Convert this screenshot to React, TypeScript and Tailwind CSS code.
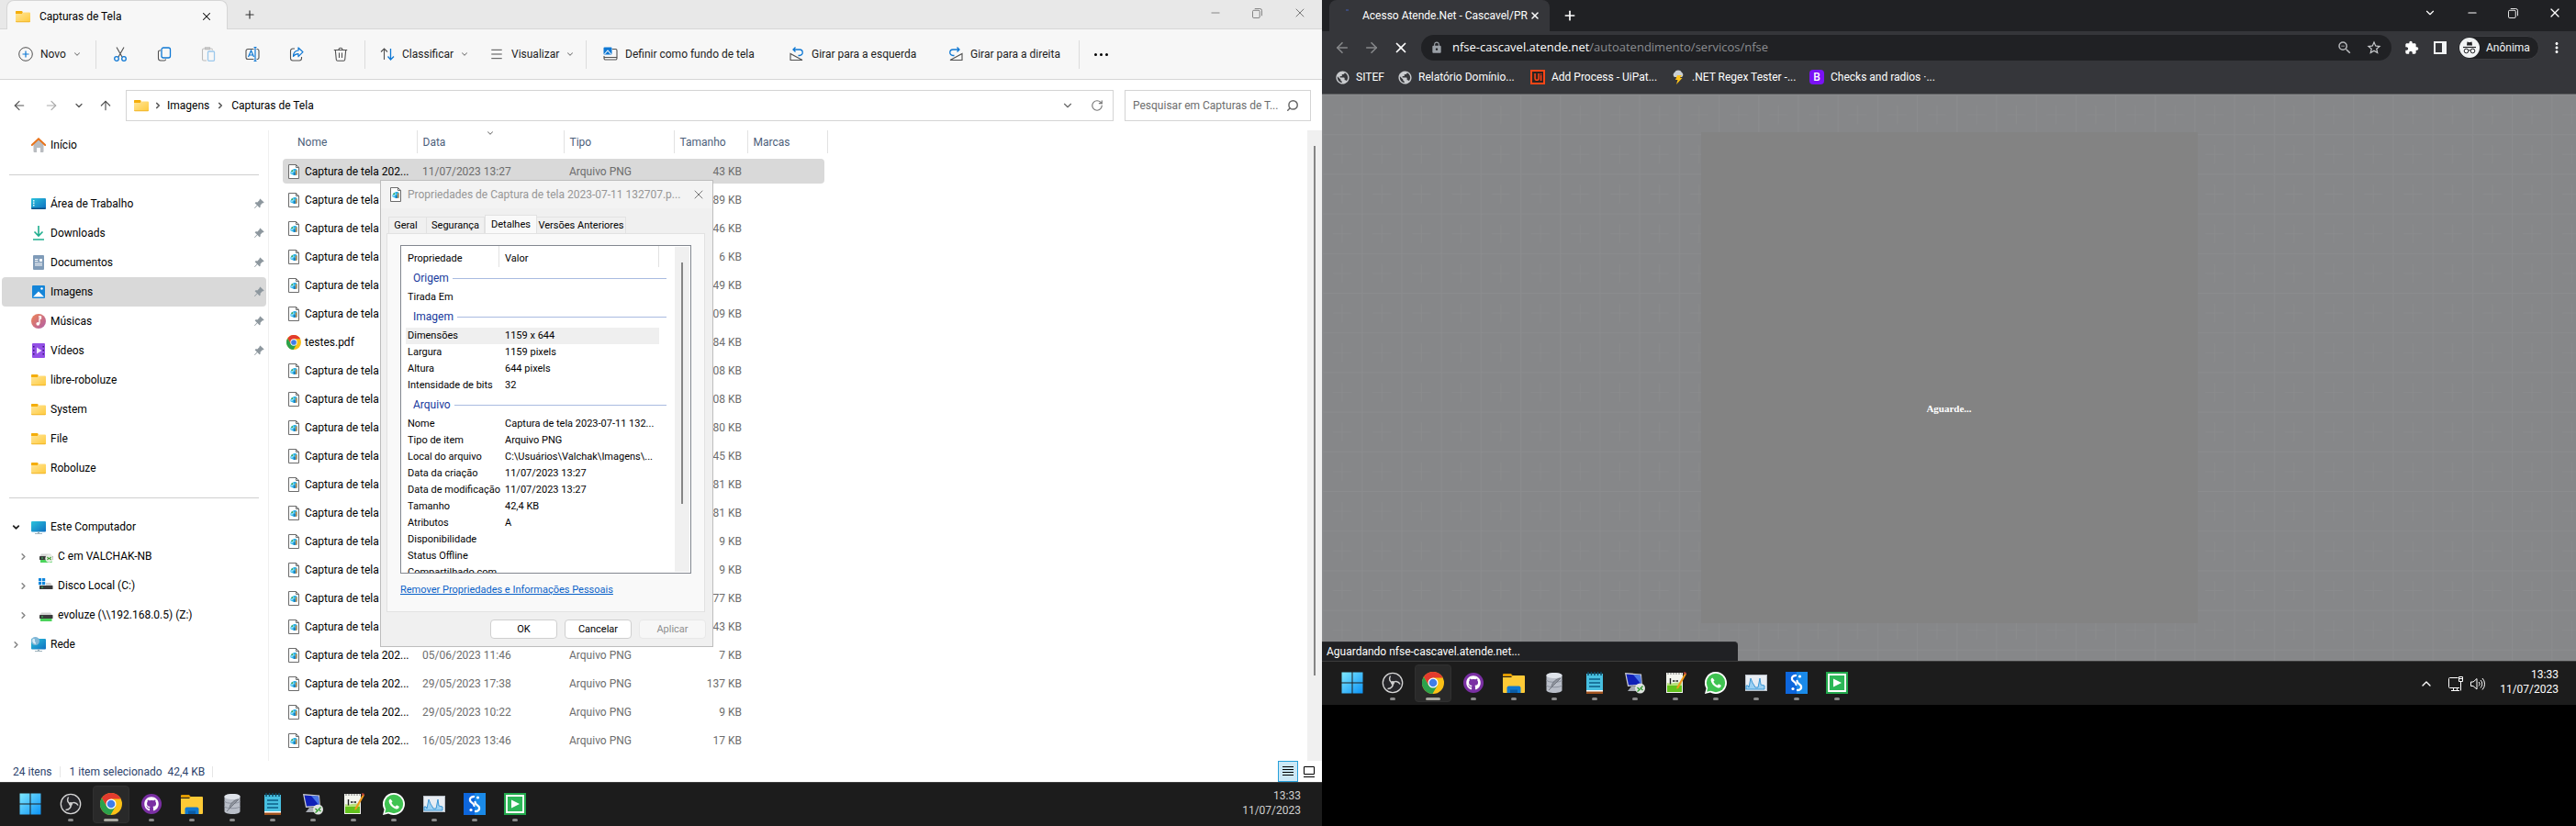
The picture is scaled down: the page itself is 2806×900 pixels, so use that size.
import React from "react";
import {
  ArrowLeft, ArrowRight, ArrowUp, ChevronDown, ChevronRight, ChevronUp, Menu, Minus, Plus, RotateCw, Search, X,
} from "lucide-react";
import { MdExtension, MdLock, MdMoreVert, MdPublic, MdStarBorder, MdZoomOut } from "react-icons/md";
import { FaGithub } from "react-icons/fa";
import { BsPinAngleFill } from "react-icons/bs";

const UI = "font-['Roboto','Open_Sans',sans-serif]";

/* ---------- shared drawings ---------- */

function Folder({ className = "h-4 w-4" }: { className?: string }) {
  return (
    <svg viewBox="0 0 16 16" className={className} aria-hidden="true">
      <defs>
        <linearGradient id="folder" x1="0" y1="0" x2="1" y2="1">
          <stop offset="0" stopColor="#ffe69a" />
          <stop offset="1" stopColor="#ffca3d" />
        </linearGradient>
      </defs>
      <path d="M0 3a1 1 0 0 1 1-1h5.500l1.500 1.500H0z" fill="#f0a800" />
      <path d="M0 2.500h7.500v4H0z" fill="#f5ae0b" />
      <path d="M0 5h7l1.500-1.500H15a1 1 0 0 1 1 1V13a1 1 0 0 1-1 1H1a1 1 0 0 1-1-1z" fill="url(#folder)" />
      <path d="M0 13.200h16a1 1 0 0 1-1 1H1a1 1 0 0 1-1-1z" fill="#f0b429" />
    </svg>
  );
}

function PngFile() {
  return (
    <svg viewBox="0 0 16 16" className="h-4 w-4 shrink-0" aria-hidden="true">
      <path d="M2.500.5h8l3 3v12h-11z" fill="#fff" stroke="#6b6b6b" />
      <path d="M10.500.5v3h3" fill="none" stroke="#6b6b6b" />
      <path d="M4.500 10.500c-.6-2.500 1-4.700 3.500-5.300 1.800-.4 3.700.3 3.700 1.500v4.500c-1.500 0-2.200.8-3.700.8-1 0-1-1-2-1z" fill="#29b1e6" />
      <path d="m4.500 9.500 2.800-3.300 1.500 1L6 10.500z" fill="#8fdcf7" />
      <circle cx="6.300" cy="7.200" r=".9" fill="#4caf50" />
      <path d="M9.800 6.500h1.700v5.300H9.800z" fill="#c98d4b" />
      <path d="M8.200 9h1.500v3H8.200z" fill="#1976b8" />
    </svg>
  );
}

function Chrome({ className = "h-6 w-6" }: { className?: string }) {
  return (
    <svg viewBox="0 0 24 24" className={className} aria-hidden="true">
      <circle cx="12" cy="12" r="12" fill="#fbc116" />
      <path d="M12 6.500h10.670A12 12 0 0 0 1.900 5.510l5.340 9.240z" fill="#e33b2e" />
      <path d="M1.900 5.510A12 12 0 0 0 11.430 24l5.330-9.250-9.520 0z" fill="#2ba24c" />
      <circle cx="12" cy="12" r="5.500" fill="#fff" />
      <circle cx="12" cy="12" r="4.300" fill="#3f7de8" />
    </svg>
  );
}

function Monitor({ dots = false, globe = false }: { dots?: boolean; globe?: boolean }) {
  return (
    <svg viewBox="0 0 16 16" className="h-4 w-4" aria-hidden="true">
      <defs>
        <linearGradient id="screen" x1="0" y1="0" x2="1" y2="1">
          <stop offset="0" stopColor="#2bc3dc" />
          <stop offset="1" stopColor="#0f6fc0" />
        </linearGradient>
      </defs>
      <rect x="0" y="2" width="16" height="11.500" rx="1" fill="url(#screen)" />
      {dots ? (
        <>
          <path d="M2 4h1.500v1.500H2zM2 6.500h1.500V8H2zM2 9h1.500v1.500H2z" fill="#e6f8fc" />
          <path d="M0 12.500h16v.5a1 1 0 0 1-1 1H1a1 1 0 0 1-1-1z" fill="#0a4f86" />
        </>
      ) : (
        <path d="M7 13.500h2v1.500h3v1H4v-1h3z" fill="#9fb3bd" />
      )}
      {globe && (
        <>
          <circle cx="4.500" cy="4.500" r="4.500" fill="#7fb6d6" />
          <path d="M1.500 2.500c2-1 3 0 2.500 1.500S6 6 4.500 8C3 7 .5 6 1.500 2.500z" fill="#d5ecf7" />
        </>
      )}
    </svg>
  );
}

function Drive({ kind }: { kind: "shared" | "local" | "net" }) {
  return (
    <svg viewBox="0 0 16 16" className="h-4 w-4" aria-hidden="true">
      {kind === "local" ? (
        <>
          <path d="M0 0h3.200v3.200H0zM4 0h3.200v3.200H4zM0 4h3.200v3.200H0zM4 4h3.200v3.200H4z" fill="#0f86dc" />
          <path d="M8 5h5l2 3H8z" fill="#d4d4d4" />
        </>
      ) : (
        <path d="M3 5.500h10l2 3H1z" fill="#d4d4d4" />
      )}
      <rect x="1" y="8" width="14.500" height="4" rx=".6" fill="#3a3a3a" />
      <circle cx="4" cy="10" r=".8" fill="#3fe06a" />
      {kind !== "local" && <path d="M2 12h12.500v3H2z" fill="#4bd35b" />}
      {kind === "shared" && (
        <>
          <circle cx="11.500" cy="10.500" r="4.200" fill="#e9efe6" />
          <path d="m9.500 9 1.500 1.500L9.500 12m4-3L12 10.500l1.500 1.500" fill="none" stroke="#3a9b2d" strokeWidth="1.100" />
        </>
      )}
    </svg>
  );
}

function Home() {
  return (
    <svg viewBox="0 0 16 16" className="h-4 w-4" aria-hidden="true">
      <path d="M2.500 7 8 2l5.500 5v8a1 1 0 0 1-1 1H10v-5H6v5H3.500a1 1 0 0 1-1-1z" fill="#b9bcc0" />
      <path d="M.8 8 8 1.300 15.200 8" fill="none" stroke="#e8731a" strokeWidth="2" strokeLinecap="round" />
    </svg>
  );
}

function Download() {
  return (
    <svg viewBox="0 0 16 16" className="h-4 w-4" fill="none" stroke="#1fae8e" strokeWidth="1.600" aria-hidden="true">
      <path d="M8 0v11M3.500 6.500 8 11l4.500-4.500M2 15h12" />
    </svg>
  );
}

function Documents() {
  return (
    <svg viewBox="0 0 16 16" className="h-4 w-4" aria-hidden="true">
      <rect x="2" width="12" height="16" rx="1" fill="#7f9bb8" />
      <path d="M4 4h3.500v1H4zM4 6h3.500v1H4zM4 8.500h8v1H4zM4 10.500h8v1H4zM9 4h3v3H9z" fill="#fff" />
    </svg>
  );
}

function Pictures() {
  return (
    <svg viewBox="0 0 16 16" className="h-4 w-4" aria-hidden="true">
      <rect x="1" y="1" width="14" height="14" rx="1" fill="#1585d8" />
      <path d="m2 13.500 6-6 6 6z" fill="#fff" />
      <circle cx="11.500" cy="4.500" r="1.200" fill="#fff" />
    </svg>
  );
}

function Music() {
  return (
    <svg viewBox="0 0 16 16" className="h-4 w-4" aria-hidden="true">
      <defs>
        <linearGradient id="music" x1="0" y1="0" x2="1" y2="1">
          <stop offset="0" stopColor="#ef8354" />
          <stop offset="1" stopColor="#b05fa8" />
        </linearGradient>
      </defs>
      <circle cx="8" cy="8" r="8" fill="url(#music)" />
      <path d="M8 3h2.500v2H9v5.500" fill="none" stroke="#fff" strokeWidth="1.300" />
      <circle cx="7.300" cy="10.800" r="1.900" fill="#fff" />
    </svg>
  );
}

function Videos() {
  return (
    <svg viewBox="0 0 16 16" className="h-4 w-4" aria-hidden="true">
      <rect x="1" width="14" height="16" rx="1" fill="#9350e6" />
      <path d="M2 3h1.500v1.500H2zM2 7h1.500v1.500H2zM2 11h1.500v1.500H2zM12.500 3H14v1.500h-1.500zM12.500 7H14v1.500h-1.500zM12.500 11H14v1.500h-1.500z" fill="#3b1b78" />
      <path d="m6 4.500 5.500 3.500L6 11.500z" fill="#f1e6ff" />
    </svg>
  );
}

/* ---------- ribbon drawings ---------- */

type DrawProps = { children: React.ReactNode; className?: string };
const Draw = ({ children, className = "h-4 w-4" }: DrawProps) => (
  <svg viewBox="0 0 16 16" className={className} fill="none" stroke="#505050" strokeWidth="1.100" aria-hidden="true">
    {children}
  </svg>
);
const CutIcon = () => (
  <Draw>
    <path d="m4 .5 6 10.500M12 .5 6 11" />
    <g stroke="#0f78d4" strokeWidth="1.300"><circle cx="4" cy="13" r="2.300" /><circle cx="12" cy="13" r="2.300" /></g>
  </Draw>
);
const CopyIcon = () => (
  <Draw>
    <path d="M4 4H3a1.500 1.500 0 0 0-1.500 1.500v7A2.500 2.500 0 0 0 4 15h4a1.500 1.500 0 0 0 1.500-1.500" />
    <rect x="5" y="1" width="9.500" height="11" rx="2" stroke="#0f78d4" strokeWidth="1.300" />
  </Draw>
);
const PasteIcon = () => (
  <Draw>
    <path d="M6 15H3a1.500 1.500 0 0 1-1.500-1.500v-10A1.500 1.500 0 0 1 3 2h8a1.500 1.500 0 0 1 1.500 1.500M4.500.800h5v2h-5z" stroke="#bcbcbc" />
    <rect x="7.500" y="5" width="7" height="10.300" rx="1" stroke="#9cc8ec" strokeWidth="1.300" />
  </Draw>
);
const RenameIcon = () => (
  <Draw>
    <path d="M9.500 2.500H3A2 2 0 0 0 1 4.500v7a2 2 0 0 0 2 2h6.500M12.500 2.500A2 2 0 0 1 15 4.500v7a2 2 0 0 1-2.500 2" />
    <path d="m3.500 11 3-7 3 7M4.500 9h4M11 .5v15M9.500.500h3M9.500 15.500h3" stroke="#0f78d4" strokeWidth="1.200" />
  </Draw>
);
const ShareIcon = () => (
  <Draw>
    <path d="M6 2H4a2.500 2.500 0 0 0-2.500 2.500v8A2.500 2.500 0 0 0 4 15h7a2.500 2.500 0 0 0 2.500-2.500V11" />
    <path d="M10 1v3C6 4.300 4.500 7 4.500 10.500 6 8.300 8 7.700 10 7.700v3l5-5z" stroke="#0f78d4" strokeWidth="1.200" strokeLinejoin="round" />
  </Draw>
);
const TrashIcon = () => (
  <Draw>
    <path d="M.8 3.500h14.400M6 3.300a2 2 0 0 1 4 0M2.300 3.500l1 10.500a1.500 1.500 0 0 0 1.500 1.300h6.400a1.500 1.500 0 0 0 1.500-1.300l1-10.500M6.500 6.500v5.500M9.500 6.500v5.500" />
  </Draw>
);
const SortIcon = () => (
  <Draw>
    <path d="M4.500 14V2M1 5.500 4.500 2 8 5.500" />
    <path d="M11.500 2v12M8.500 10.500l3 3.500 3.500-3.500" stroke="#0f78d4" strokeWidth="1.300" />
  </Draw>
);
const WallpaperIcon = () => (
  <Draw>
    <path d="M10 2.500h3.500A1.500 1.500 0 0 1 15 4v8.500a1.500 1.500 0 0 1-1.500 1.500h-11A1.500 1.500 0 0 1 1 12.500V10M1 11.500h14" />
    <rect x=".5" y=".5" width="9" height="8" rx="1" fill="#0f78d4" stroke="none" />
    <path d="m1.500 8 3.500-4 3.500 4" stroke="#fff" />
  </Draw>
);
const RotateIcon = ({ flip = false }: { flip?: boolean }) => (
  <Draw className={flip ? "h-4 w-4 -scale-x-100" : "h-4 w-4"}>
    <path d="M1 7.500v7h13z" />
    <path d="M4 3h7a3.200 3.200 0 0 1 0 6.500H9.500M6.500.500 4 3l2.500 2.500" stroke="#0f78d4" strokeWidth="1.300" />
  </Draw>
);
const RestoreIcon = ({ className }: { className: string }) => (
  <svg viewBox="0 0 12 12" className={className} fill="none" stroke="currentColor" aria-hidden="true">
    <rect x=".5" y="2.500" width="8.500" height="9" rx="1.500" />
    <path d="M3 .5h6A2.500 2.500 0 0 1 11.500 3v6" />
  </svg>
);

/* ---------- taskbar ---------- */

const taskIcons: { name: string; art: React.ReactNode; active?: boolean; idle?: boolean }[] = [
  {
    name: "Iniciar",
    idle: true,
    art: (
      <svg viewBox="0 0 24 24" className="h-6 w-6">
        <defs>
          <linearGradient id="win" x1="0" y1="0" x2="1" y2="1"><stop offset="0" stopColor="#7fe8ff" /><stop offset="1" stopColor="#0c93f5" /></linearGradient>
        </defs>
        <path d="M.5.500h11v11H.5zM12.500.500h11v11h-11zM.5 12.500h11v11H.5zM12.500 12.500h11v11h-11z" fill="url(#win)" />
      </svg>
    ),
  },
  {
    name: "OBS Studio",
    art: (
      <svg viewBox="0 0 24 24" className="h-6 w-6">
        <circle cx="12" cy="12" r="10.700" fill="#26262a" stroke="#d5d5d5" strokeWidth="1.300" />
        <g fill="none" stroke="#cfcfcf" strokeWidth="1.500">
          <path d="M12 12c-3-1-4.500-4-2.500-7.500" />
          <path d="M12 12c3-2.500 6.500-1.500 8 1.500" />
          <path d="M12 12c1 3.500-1.500 6.500-5.500 6.500" />
        </g>
        <circle cx="12" cy="12" r="2" fill="#cfcfcf" />
      </svg>
    ),
  },
  { name: "Chrome", active: true, art: <Chrome /> },
  {
    name: "GitHub Desktop",
    art: (
      <span className="grid h-[22px] w-[22px] place-items-center rounded-full bg-[#7a2fa3]"><FaGithub className="h-4 w-4 text-white" /></span>
    ),
  },
  {
    name: "Explorador",
    art: (
      <svg viewBox="0 0 24 24" className="h-6 w-6">
        <path d="M0 3a1 1 0 0 1 1-1h8l2.500 3H0z" fill="#e09a00" />
        <path d="M0 6h9l2-2h12a1 1 0 0 1 1 1v17a1 1 0 0 1-1 1H1a1 1 0 0 1-1-1z" fill="#fdca36" />
        <path d="M4.500 17.500a2 2 0 0 1 2-2h11a2 2 0 0 1 2 2V23h-15z" fill="#0f78cf" />
        <path d="M8 19.500h8V23H8z" fill="#0a5ca6" />
      </svg>
    ),
  },
  {
    name: "Banco de dados",
    art: (
      <svg viewBox="0 0 24 24" className="h-6 w-6">
        <path d="M3.500 4c0-4 17-4 17 0v16c0 4-17 4-17 0z" fill="#b9bec8" />
        <path d="M3.500 4c0-4 17-4 17 0s-17 4-17 0z" fill="#dfe3ea" />
        <path d="M3.500 9c1 3 16 3 17 0M3.500 14.500c1 3 16 3 17 0" fill="none" stroke="#8b919d" />
        <path d="M6 20 19 7c-5 .5-9 4-10 9" fill="#8f949e" stroke="#6a6e77" strokeWidth=".8" />
      </svg>
    ),
  },
  {
    name: "Bloco de notas",
    art: (
      <svg viewBox="0 0 24 24" className="h-6 w-6">
        <rect x="3" y="2" width="18" height="20" fill="#47bfe0" />
        <path d="M3 20h18v2H3z" fill="#fff" /><path d="M3 21.500h18V24H3z" fill="#a0521e" />
        <path d="M6 8h12M6 12h12M6 16h12" stroke="#0c5f86" strokeWidth="1.500" />
        <path d="M5 0v4M8.500 0v4M12 0v4M15.500 0v4M19 0v4" stroke="#0d4a66" strokeWidth="1.500" />
      </svg>
    ),
  },
  {
    name: "Área de trabalho remota",
    art: (
      <svg viewBox="0 0 24 24" className="h-6 w-6">
        <path d="m1 1 18 1.500 1 12.500L4 16z" fill="#c9ccd2" />
        <path d="m2.500 2.500 15.500 1.200.8 10L5 14.500z" fill="#1020b8" />
        <path d="m10 3 8 .7.8 10z" fill="#4a78e8" />
        <path d="M8 16h5l2 5H4z" fill="#a7abb3" />
        <circle cx="17.500" cy="18" r="5.500" fill="#dfe3df" />
        <path d="m14.500 17 2.500 2.500-2.500 2m6-6L18 18l2.500 2" fill="none" stroke="#2f9a2d" strokeWidth="1.300" />
      </svg>
    ),
  },
  {
    name: "Notepad++",
    art: (
      <svg viewBox="0 0 24 24" className="h-6 w-6">
        <path d="M2 1h18v22H2z" fill="#f3f5ee" />
        <path d="M3 14h16v8H3z" fill="#62c21d" />
        <path d="M3 12c5 2 10-2 16 0v3H3z" fill="#b7e07c" />
        <path d="M3 2h16" stroke="#777" strokeDasharray="2 1" />
        <path d="M6.500 7v6.500M9 10h2.500M12.500 10H15" stroke="#222" strokeWidth="1.400" />
        <path d="m22.500 1-9 15.500 0 2.500 2-1.500L24 2.500z" fill="#f09a1c" />
        <path d="m21.500 0 2.500 1-1 2-2-1z" fill="#c4423a" />
      </svg>
    ),
  },
  {
    name: "WhatsApp",
    art: (
      <svg viewBox="0 0 24 24" className="h-6 w-6">
        <path d="M12 0A12 12 0 1 1 6 22.400L0 24l1.600-6A12 12 0 0 1 12 0z" fill="#fff" />
        <circle cx="12" cy="12" r="10.200" fill="#3fc351" /><path d="m2.200 21.800 1.500-6 4.500 4.500z" fill="#3fc351" />
        <path d="M8.300 6.500c-1.800.6-2.200 2.600-1 5 1.600 3.200 4 5 7 5.900 2 .5 3.500-.7 3.500-2.600l-2.700-1.500-1.300 1.500c-2-.7-3.500-2.200-4.400-4.100l1.200-1.400z" fill="#fff" />
      </svg>
    ),
  },
  {
    name: "Monitor",
    art: (
      <svg viewBox="0 0 24 24" className="h-6 w-6">
        <rect y="3" width="24" height="18" fill="#b8bec6" /><rect x="1" y="4" width="22" height="16" fill="#e8edf3" />
        <path d="M1 15h2l1 2 2-10 2 5 2 3 1 2h3l2-10 1 7 4 1v4H1z" fill="#9ad0f3" stroke="#2f8fd0" strokeWidth=".9" />
      </svg>
    ),
  },
  {
    name: "SS",
    art: (
      <svg viewBox="0 0 24 24" className="h-6 w-6">
        <path d="M0 0h24v24H0z" fill="#0d66dc" /><path d="M12 0h12v24H12z" fill="#1a8ae8" />
        <path d="M11 4c-3 0-4.500 2-4 4.200.5 2.300 4.500 2.800 4.500 5.800M13 20c3 0 4.500-2 4-4.200-.5-2.300-4.500-2.800-4.500-5.800" fill="none" stroke="#fff" strokeWidth="2.300" strokeLinecap="round" />
        <circle cx="15.500" cy="5" r="1.600" fill="#fff" /><circle cx="8" cy="18.500" r="1.600" fill="#fff" />
      </svg>
    ),
  },
  {
    name: "Executor",
    art: (
      <svg viewBox="0 0 24 24" className="h-6 w-6">
        <path d="M0 0h24v24H0z" fill="#22a94c" /><path d="M3 3h18v18H3z" fill="#2cb757" stroke="#fff" strokeWidth="1.800" />
        <path d="m8 7.500 9 4.500-9 4.500z" fill="#fff" />
      </svg>
    ),
  },
];

function Taskbar({ tray = false }: { tray?: boolean }) {
  return (
    <footer className="flex h-12 shrink-0 items-stretch border-t border-[#3c3c3c] bg-[#1c1c1c] pl-[11px]">
      {taskIcons.map((t) => (
        <button
          key={t.name}
          aria-label={t.name}
          className={`mx-0.5 my-[3px] flex w-10 flex-col items-center rounded pt-[7px] ${t.active ? "border border-[#303030] bg-[#292929]" : "border border-transparent"}`}
        >
          <span className="grid h-6 w-6 place-items-center">{t.art}</span>
          {!t.idle && <span className={`mt-1 h-[3px] rounded-full ${t.active ? "w-4 bg-[#a8a8a0]" : "w-1.5 bg-[#8a8a8a]"}`} />}
        </button>
      ))}
      <div className={`ml-auto flex items-center text-white ${tray ? "pr-[19px]" : "pr-[23px]"}`}>
        {tray && (
          <div className="mr-4 flex items-center">
            <ChevronUp className="mr-4 h-4 w-4" />
            <svg viewBox="0 0 16 16" className="mr-2 h-4 w-4" fill="none" stroke="currentColor" aria-hidden="true">
              <path d="M10.500 1.500H1.500a1 1 0 0 0-1 1v9a1 1 0 0 0 1 1H12M5.500 12.500v2.500M9.500 12.500v2.500M3 15.500h9M11.500.500h4v5h-4zM13.500 5.500v10M12 2.500h3" />
            </svg>
            <svg viewBox="0 0 16 16" className="h-4 w-4" fill="none" stroke="currentColor" aria-hidden="true">
              <path d="M.5 6v4.500H3l4 3.500V2.500L3 6zM9 6a3 3 0 0 1 0 4.500M11 4a6 6 0 0 1 0 8.500M13 2a9 9 0 0 1 0 12.500" />
            </svg>
          </div>
        )}
        <div className={`pb-1 text-right text-xs leading-4 ${tray ? "" : "text-[#cfcfcf]"}`}>
          <div>13:33</div>
          <div>11/07/2023</div>
        </div>
      </div>
    </footer>
  );
}

/* ---------- explorer ---------- */

const VRule = () => <span className="h-[31px] w-px bg-[#dcdcdc]" />;

function RibbonButton({ icon, label, width, menu = false }: { icon: React.ReactNode; label: string; width: string; menu?: boolean }) {
  return (
    <button className={`flex items-center ${width}`}>
      {icon}
      <span className="mr-[7px] ml-2 whitespace-nowrap">{label}</span>
      {menu && <ChevronDown className="h-2.5 w-2.5 text-[#777]" strokeWidth={2.5} />}
    </button>
  );
}

function Ribbon() {
  return (
    <div className="flex h-[55px] items-center border-b border-[#d6d6d6] bg-[#f7f7f7] pl-5 text-[#1b1b1b]">
      <RibbonButton
        icon={
          <svg viewBox="0 0 16 16" className="h-4 w-4" fill="none" aria-hidden="true">
            <circle cx="8" cy="8" r="7.300" stroke="#505050" /><path d="M8 4.500v7M4.500 8h7" stroke="#0f78d4" strokeWidth="1.200" />
          </svg>
        }
        label="Novo" width="w-[84px]" menu
      />
      <VRule />
      <div className="mr-0.5 ml-0.5 flex">
        {[["Recortar", CutIcon], ["Copiar", CopyIcon], ["Colar", PasteIcon], ["Renomear", RenameIcon], ["Compartilhar", ShareIcon], ["Excluir", TrashIcon]].map(([n, I]) => {
          const Icon = I as React.FC;
          return (
            <button key={n as string} aria-label={n as string} className="grid h-8 w-12 place-items-center"><Icon /></button>
          );
        })}
      </div>
      <VRule />
      <div className="ml-4 flex">
        <RibbonButton icon={<SortIcon />} label="Classificar" width="w-[119px]" menu />
        <RibbonButton icon={<Menu className="h-4 w-4 text-[#505050]" strokeWidth={1.5} />} label="Visualizar" width="w-[105px]" menu />
      </div>
      <VRule />
      <div className="ml-[18px] flex">
        <RibbonButton icon={<WallpaperIcon />} label="Definir como fundo de tela" width="w-[203px]" />
        <RibbonButton icon={<RotateIcon />} label="Girar para a esquerda" width="w-[173px]" />
        <RibbonButton icon={<RotateIcon flip />} label="Girar para a direita" width="w-[142px]" />
      </div>
      <VRule />
      <button aria-label="Mais" className="ml-4 flex gap-[3px]">
        <i className="h-[3px] w-[3px] rounded-full bg-black" /><i className="h-[3px] w-[3px] rounded-full bg-black" /><i className="h-[3px] w-[3px] rounded-full bg-black" />
      </button>
    </div>
  );
}

function NavItem({ icon, label, pinned, active, arrow, deep }: { icon: React.ReactNode; label: string; pinned?: boolean; active?: boolean; arrow?: "down" | "right"; deep?: boolean }) {
  return (
    <a href="#" className={`mr-[2px] ml-0.5 flex h-8 items-center rounded-sm pr-0.5 ${deep ? "pl-[18px]" : "pl-2.5"} ${active ? "bg-[#d9d9d9]" : ""}`}>
      <span className="flex w-[22px]">
        {arrow === "down" && <ChevronDown className="h-[11px] w-[11px] text-[#222]" strokeWidth={4} />}
        {arrow === "right" && <ChevronRight className="h-[11px] w-[11px] text-[#888]" strokeWidth={3.5} />}
      </span>
      {icon}
      <span className="ml-[5px]">{label}</span>
      {pinned && <BsPinAngleFill className="ml-auto h-3 w-3 text-[#8d979e]" />}
    </a>
  );
}

const NavRule = () => <div className="flex h-8 items-center px-2.5"><hr className="w-full border-[#cfcfcf]" /></div>;

function Sidebar() {
  return (
    <nav className="w-[293px] shrink-0 border-r border-[#f0f0f0] text-black">
      <NavItem icon={<Home />} label="Início" />
      <NavRule />
      <NavItem icon={<Monitor dots />} label="Área de Trabalho" pinned />
      <NavItem icon={<Download />} label="Downloads" pinned />
      <NavItem icon={<Documents />} label="Documentos" pinned />
      <NavItem icon={<Pictures />} label="Imagens" pinned active />
      <NavItem icon={<Music />} label="Músicas" pinned />
      <NavItem icon={<Videos />} label="Vídeos" pinned />
      <NavItem icon={<Folder />} label="libre-roboluze" />
      <NavItem icon={<Folder />} label="System" />
      <NavItem icon={<Folder />} label="File" />
      <NavItem icon={<Folder />} label="Roboluze" />
      <NavRule />
      <NavItem icon={<Monitor />} label="Este Computador" arrow="down" />
      <NavItem icon={<Drive kind="shared" />} label="C em VALCHAK-NB" arrow="right" deep />
      <NavItem icon={<Drive kind="local" />} label="Disco Local (C:)" arrow="right" deep />
      <NavItem icon={<Drive kind="net" />} label={"evoluze (\\\\192.168.0.5) (Z:)"} arrow="right" deep />
      <NavItem icon={<Monitor globe />} label="Rede" arrow="right" />
    </nav>
  );
}

const full = "Captura de tela 202...";
const part = "Captura de tela";
const files: [string, string, string, string][] = [
  [full, "11/07/2023 13:27", "Arquivo PNG", "43 KB"],
  [part, "", "", "89 KB"],
  [part, "", "", "46 KB"],
  [part, "", "", "6 KB"],
  [part, "", "", "49 KB"],
  [part, "", "", "09 KB"],
  ["testes.pdf", "", "", "84 KB"],
  [part, "", "", "08 KB"],
  [part, "", "", "08 KB"],
  [part, "", "", "80 KB"],
  [part, "", "", "45 KB"],
  [part, "", "", "81 KB"],
  [part, "", "", "81 KB"],
  [part, "", "", "9 KB"],
  [part, "", "", "9 KB"],
  [part, "", "", "77 KB"],
  [part, "", "", "43 KB"],
  [full, "05/06/2023 11:46", "Arquivo PNG", "7 KB"],
  [full, "29/05/2023 17:38", "Arquivo PNG", "137 KB"],
  [full, "29/05/2023 10:22", "Arquivo PNG", "9 KB"],
  [full, "16/05/2023 13:46", "Arquivo PNG", "17 KB"],
];

function FileTable() {
  const th = "border-r border-[#e2e2e2] p-0 text-left font-normal";
  return (
    <table className="ml-[15px] table-fixed self-start whitespace-nowrap text-[#6d6d6d]">
      <colgroup><col className="w-[146px]" /><col className="w-40" /><col className="w-[120px]" /><col className="w-20" /><col className="w-[87px]" /></colgroup>
      <thead className="text-[#4c607a]">
        <tr className="h-[25px]">
          <th className={`${th} pl-4`}>Nome</th>
          <th className={`${th} relative pl-1.5`}>Data<ChevronDown className="absolute -top-0.5 left-[74px] h-2.5 w-2.5 text-[#777]" strokeWidth={2.5} /></th>
          <th className={`${th} pl-1.5`}>Tipo</th>
          <th className={`${th} pl-1.5`}>Tamanho</th>
          <th className={`${th} pl-1.5`}>Marcas</th>
        </tr>
        <tr className="h-1"><td colSpan={5} /></tr>
      </thead>
      <tbody>
        {files.map(([name, date, type, size], i) => {
          const bg = i === 0 ? "bg-[#d9d9d9]" : "";
          return (
            <tr key={i} className="h-[31px]">
              <td className="p-0">
                <div className={`flex h-[27px] items-center gap-1 rounded-l-sm pl-1 text-black ${bg}`}>
                  {name.endsWith("pdf") ? <Chrome className="h-4 w-4" /> : <PngFile />}
                  <span>{name}</span>
                </div>
              </td>
              <td className="p-0"><div className={`flex h-[27px] items-center pl-1.5 ${bg}`}>{date}</div></td>
              <td className="p-0"><div className={`flex h-[27px] items-center pl-1.5 ${bg}`}>{type}</div></td>
              <td className="p-0"><div className={`flex h-[27px] items-center justify-end pr-1.5 ${bg}`}>{size}</div></td>
              <td className="p-0"><div className={`mr-[3px] h-[27px] rounded-r-sm ${bg}`} /></td>
            </tr>
          );
        })}
      </tbody>
    </table>
  );
}

function PropRow({ k, v = "", hot }: { k: string; v?: string; hot?: boolean }) {
  return (
    <tr className={`h-[18px] ${hot ? "bg-[#efefef]" : ""}`}>
      <td className="w-[108px] p-0 pl-0.5">{k}</td>
      <td className="p-0">{v}</td>
    </tr>
  );
}

function PropGroup({ title }: { title: string }) {
  return (
    <tr className="h-6">
      <td colSpan={2} className="p-0">
        <div className="-mr-2 flex items-center gap-1 pl-2 text-xs text-[#16389c]">
          {title}
          <span className="h-px flex-1 bg-[#a9bbe0]" />
        </div>
      </td>
    </tr>
  );
}

function PropertiesDialog() {
  const tab = "border border-b-0 border-[#e2e2e2] leading-[17px]";
  const btn = "h-[21px] w-[73px] rounded border";
  return (
    <section role="dialog" aria-label="Propriedades" className="absolute top-[196px] left-[414px] flex h-[509px] w-[363px] flex-col border border-[#bdbdbd] bg-[#f0f0f0] text-[11px] leading-4 text-black">
      <header className="flex h-[30px] items-center bg-[#f3f3f3] pr-[7px] pl-2 text-xs text-[#969696]">
        <PngFile />
        <span className="ml-[5px] whitespace-nowrap">Propriedades de Captura de tela 2023-07-11 132707.p...</span>
        <button aria-label="Fechar" className="ml-auto"><X className="h-4 w-4 text-[#777]" strokeWidth={1.5} /></button>
      </header>
      <div role="tablist" className="mt-[7px] flex h-5 items-end pl-2">
        <button role="tab" className={`${tab} h-[18px] w-[42px] pr-1`}>Geral</button>
        <button role="tab" className={`${tab} h-[18px] w-[63px] border-l-0`}>Segurança</button>
        <button role="tab" aria-selected="true" className={`${tab} h-5 w-[57px] bg-[#f9f9f9]`}>Detalhes</button>
        <button role="tab" className={`${tab} h-[18px] w-[97px] border-l-0`}>Versões Anteriores</button>
      </div>
      <div className="mx-1.5 mr-2 flex h-[413px] flex-col border border-[#e2e2e2] bg-[#f9f9f9] px-3.5 pt-3">
        <div className="flex h-[358px] shrink-0 overflow-hidden border border-[#82878f] bg-white">
          <div className="w-[281px] shrink-0 pl-[5px]">
            <div className="flex h-[23px] items-center">
              <span className="flex h-full w-[102px] items-center border-r border-[#e2e2e2] pt-1 pl-0.5">Propriedade</span>
              <span className="flex h-full flex-1 items-center border-r border-[#e2e2e2] pt-1 pl-1.5">Valor</span>
            </div>
            <table className="w-full border-collapse whitespace-nowrap">
              <tbody>
                <PropGroup title="Origem" />
                <PropRow k="Tirada Em" />
                <PropGroup title="Imagem" />
                <PropRow k="Dimensões" v="1159 x 644" hot />
                <PropRow k="Largura" v="1159 pixels" />
                <PropRow k="Altura" v="644 pixels" />
                <PropRow k="Intensidade de bits" v="32" />
                <PropGroup title="Arquivo" />
                <PropRow k="Nome" v="Captura de tela 2023-07-11 132..." />
                <PropRow k="Tipo de item" v="Arquivo PNG" />
                <PropRow k="Local do arquivo" v={"C:\\Usuários\\Valchak\\Imagens\\..."} />
                <PropRow k="Data da criação" v="11/07/2023 13:27" />
                <PropRow k="Data de modificação" v="11/07/2023 13:27" />
                <PropRow k="Tamanho" v="42,4 KB" />
                <PropRow k="Atributos" v="A" />
                <PropRow k="Disponibilidade" />
                <PropRow k="Status Offline" />
                <PropRow k="Compartilhado com" />
              </tbody>
            </table>
          </div>
          <div className="my-px mr-px ml-auto flex w-4 justify-center bg-[#f0f0f0] pt-[17px]"><span className="h-[263px] w-0.5 bg-[#858585]" /></div>
        </div>
        <a href="#" className="mt-2.5 self-start whitespace-nowrap text-[#0a62c8] underline">Remover Propriedades e Informações Pessoais</a>
      </div>
      <div className="mt-2 flex justify-end gap-2 pr-[7px]">
        <button className={`${btn} border-[#cfcfcf] bg-white`}>OK</button>
        <button className={`${btn} border-[#cfcfcf] bg-white`}>Cancelar</button>
        <button disabled className={`${btn} border-[#e8e8e8] bg-[#f7f7f7] text-[#8e8e8e]`}>Aplicar</button>
      </div>
    </section>
  );
}

function Explorer() {
  return (
    <div className="relative flex min-h-screen flex-col bg-white text-xs">
      <header className="flex h-8 items-stretch border-b border-[#d6d6d6] bg-[#e8e8e8] pl-[7px]">
        <div className="-mb-px flex w-[241px] items-center rounded-t-lg border border-b-0 border-[#d6d6d6] bg-[#f7f7f7] pt-0.5 pr-[15px] pl-[9px] text-black">
          <Folder />
          <span className="ml-2.5">Capturas de Tela</span>
          <button aria-label="Fechar guia" className="ml-auto"><X className="h-3.5 w-3.5" strokeWidth={1.8} /></button>
        </div>
        <button aria-label="Nova guia" className="ml-[17px]"><Plus className="h-3.5 w-3.5 text-[#333]" strokeWidth={2} /></button>
        <div className="ml-auto flex items-center gap-[33px] pr-4 pb-[3px] text-[#777]">
          <Minus className="h-3.5 w-3.5" strokeWidth={1.5} />
          <RestoreIcon className="h-[11px] w-[11px]" />
          <X className="h-4 w-4" strokeWidth={1.5} />
        </div>
      </header>
      <Ribbon />
      <div className="flex h-[55px] items-center py-2.5 pr-3 pl-[13px] text-[#555]">
        <ArrowLeft className="h-4 w-4" strokeWidth={1.8} />
        <ArrowRight className="ml-[19px] h-4 w-4 text-[#aaa]" strokeWidth={1.8} />
        <ChevronDown className="ml-4 h-3 w-3" strokeWidth={2.5} />
        <ArrowUp className="ml-[15px] h-4 w-4" strokeWidth={1.8} />
        <div className="ml-3.5 flex h-[34px] flex-1 items-center border border-[#d4d4d4] pr-2.5 pl-2 text-black">
          <Folder />
          <ChevronRight className="ml-[5px] h-2.5 w-2.5 text-[#555]" strokeWidth={4} />
          <a href="#" className="ml-[5px]">Imagens</a>
          <ChevronRight className="ml-[7px] h-2.5 w-2.5 text-[#555]" strokeWidth={4} />
          <a href="#" className="ml-[7px]">Capturas de Tela</a>
          <ChevronDown className="ml-auto h-3.5 w-3.5 text-[#666]" strokeWidth={2} />
          <RotateCw className="ml-[18px] h-3.5 w-3.5 text-[#777]" strokeWidth={2} />
        </div>
        <label className="ml-3 flex h-[34px] w-[203px] items-center border border-[#d4d4d4] pr-3 pl-2">
          <input aria-label="Pesquisar" placeholder="Pesquisar em Capturas de T..." className="w-full min-w-0 outline-none placeholder:text-[#6d6d6d]" />
          <Search className="h-3.5 w-3.5 shrink-0 -scale-x-100 text-[#666]" strokeWidth={2.5} />
        </label>
      </div>
      <main className="flex flex-1">
        <Sidebar />
        <FileTable />
        <div className="ml-auto flex w-4 justify-center bg-[#f0f0f0] pt-[17px]"><span className="h-[577px] w-0.5 bg-[#858585]" /></div>
      </main>
      <div className="flex h-[23px] items-center pl-3.5 text-[#2b426b]">
        <span>24 itens</span>
        <span className="mr-2.5 ml-2 h-3 w-px bg-[#e6e6e6]" />
        <span>1 item selecionado</span>
        <span className="ml-1.5">42,4 KB</span>
        <span className="ml-2 h-3 w-px bg-[#e6e6e6]" />
        <div className="ml-auto flex gap-1 pr-1.5">
          <button aria-label="Detalhes" className="grid h-[23px] w-[22px] place-items-center border border-[#26a0da] bg-[#cce8f6]">
            <svg viewBox="0 0 12 11" className="h-[11px] w-3" stroke="#000" aria-hidden="true"><path d="M0 .5h12M0 3.500h12M0 6.500h12M0 9.500h12" /></svg>
          </button>
          <button aria-label="Miniaturas" className="grid h-[23px] w-4 place-items-center">
            <svg viewBox="0 0 12 12" className="h-3 w-3" fill="none" stroke="#000" aria-hidden="true"><path d="M.5.500h11v8H.5zM0 11.500h12" /></svg>
          </button>
        </div>
      </div>
      <Taskbar />
      <PropertiesDialog />
    </div>
  );
}

/* ---------- browser ---------- */

function Bookmark({ icon, label, width }: { icon: React.ReactNode; label: string; width: string }) {
  return (
    <a href="#" className={`flex items-center whitespace-nowrap ${width}`}>
      <span className="mr-[7px] grid h-4 w-4 place-items-center">{icon}</span>
      {label}
    </a>
  );
}

function Browser() {
  return (
    <div className="flex flex-col text-xs text-white">
      <header className="flex h-[34px] items-stretch bg-[#202124] pl-2">
        <div className="flex w-60 items-center rounded-t-lg bg-[#35363a] pr-2.5 pl-3">
          <span className="mb-3 ml-1.5 h-0.5 w-[3px] bg-[#3c4a78]" />
          <span className="ml-[15px] whitespace-nowrap">Acesso Atende.Net - Cascavel/PR</span>
          <button aria-label="Fechar guia" className="ml-auto"><X className="h-3 w-3" strokeWidth={3} /></button>
        </div>
        <button aria-label="Nova guia" className="ml-[14px]"><Plus className="h-4 w-4" strokeWidth={2.5} /></button>
        <div className="ml-auto flex items-center gap-8 pr-[15px] pb-1.5">
          <ChevronDown className="h-3.5 w-3.5" strokeWidth={2} />
          <Minus className="h-3.5 w-3.5" strokeWidth={2} />
          <RestoreIcon className="h-[11px] w-[11px]" />
          <X className="h-4 w-4" strokeWidth={1.8} />
        </div>
      </header>
      <div className="flex h-9 items-center bg-[#35363a] pr-3 pl-[13px]">
        <ArrowLeft className="h-[18px] w-[18px] text-[#86888a]" strokeWidth={2.2} />
        <ArrowRight className="ml-3.5 h-[18px] w-[18px] text-[#86888a]" strokeWidth={2.2} />
        <X className="ml-3.5 h-[18px] w-[18px]" strokeWidth={2.2} />
        <div className="ml-[13px] flex h-7 flex-1 items-center rounded-full bg-[#202124] pr-2.5 pl-2.5 text-[#9aa0a6]">
          <MdLock className="h-3.5 w-3.5" />
          <span className="ml-2.5 font-['Open_Sans',sans-serif] text-[13px]">
            <span className="text-white">nfse-cascavel.atende.net</span><span className="text-[#8b8d91]">/autoatendimento/servicos/nfse</span>
          </span>
          <MdZoomOut className="ml-auto h-[18px] w-[18px] text-[#b4b6b9]" />
          <MdStarBorder className="ml-3.5 h-[18px] w-[18px] text-[#c8cacd]" />
        </div>
        <MdExtension className="ml-3.5 h-4 w-4" />
        <svg viewBox="0 0 14 14" className="ml-4 h-3.5 w-3.5" aria-hidden="true"><path d="M0 0h14v14H0z" fill="#f1f3f4" /><path d="M2 2h7v10H2z" fill="#35363a" /></svg>
        <button className="ml-3 flex h-[26px] w-[89px] items-center rounded-full border border-[#3d3e42] bg-[#202124] pl-px text-[#f1f3f4]">
          <svg viewBox="0 0 22 22" className="mr-[7px] h-[22px] w-[22px]" aria-hidden="true">
            <circle cx="11" cy="11" r="11" fill="#f1f3f4" />
            <path d="M8 8.500 8.500 4.500 11 5.200l2.500-.7.500 4z" fill="#202124" />
            <path d="M4 10.500h14" stroke="#202124" strokeWidth="1.200" />
            <g fill="none" stroke="#202124"><circle cx="7.500" cy="14.500" r="2.300" /><circle cx="14.500" cy="14.500" r="2.300" /><path d="M9.800 14c.8-.5 1.600-.5 2.400 0" /></g>
          </svg>
          Anônima
        </button>
        <MdMoreVert className="ml-2.5 h-[18px] w-[18px]" />
      </div>
      <nav className="flex h-[33px] items-center border-b border-[#5c5d60] bg-[#35363a] pb-1 pl-3.5">
        <Bookmark icon={<MdPublic className="h-[17px] w-[17px] text-[#c9cbce]" />} label="SITEF" width="w-[68px]" />
        <Bookmark icon={<MdPublic className="h-[17px] w-[17px] text-[#c9cbce]" />} label="Relatório Domínio..." width="w-[145px]" />
        <Bookmark icon={<span className="grid h-4 w-4 place-items-center border-2 border-[#fa4616] bg-[#2b2220] text-[10px] font-bold text-[#fa4616]">Ui</span>} label="Add Process - UiPat..." width="w-[153px]" />
        <Bookmark
          icon={
            <svg viewBox="0 0 16 16" className="h-4 w-4" aria-hidden="true">
              <path d="M4 8a3 3 0 0 1 0-5 4.500 4.500 0 0 1 8 0 3 3 0 0 1 0 5z" fill="#c9ced3" />
              <path d="M7 6h5l-2 3h2.500L6 16l1.500-5H5z" fill="#fcc21b" />
            </svg>
          }
          label=".NET Regex Tester -..." width="w-[151px]"
        />
        <Bookmark icon={<span className="grid h-4 w-4 place-items-center rounded-sm bg-[#7a12f5] text-xs font-medium text-white">B</span>} label="Checks and radios ·..." width="w-40" />
      </nav>
      <main className="relative flex h-[617px] flex-col items-center justify-between bg-[#868789]">
        <svg className="absolute inset-0 h-full w-full" aria-hidden="true">
          <defs>
            <pattern id="tiles" width="43.200" height="43.200" patternUnits="userSpaceOnUse">
              <path d="M.5 0v43.200M0 .5h43.200" stroke="#8b8c8e" fill="none" />
              <path d="M22 12v20M12 22h20" stroke="#8a8b8d" fill="none" />
            </pattern>
          </defs>
          <rect width="100%" height="100%" fill="url(#tiles)" />
        </svg>
        <div className="relative mt-[41px] flex h-[535px] w-[541px] items-center justify-center bg-[#838383] pt-[68px] font-['Liberation_Serif',serif] text-[11px] font-bold">
          Aguarde...
        </div>
        <div className="relative -mt-4 h-[21px] w-[453px] self-start rounded-tr border-t border-[#2d2e31] bg-[#202124] pl-[5px] leading-5">
          Aguardando nfse-cascavel.atende.net...
        </div>
      </main>
      <Taskbar tray />
    </div>
  );
}

export default function App() {
  return (
    <div className={`grid min-h-screen grid-cols-[1440fr_1366fr] items-start bg-black ${UI}`}>
      <Explorer />
      <Browser />
    </div>
  );
}
